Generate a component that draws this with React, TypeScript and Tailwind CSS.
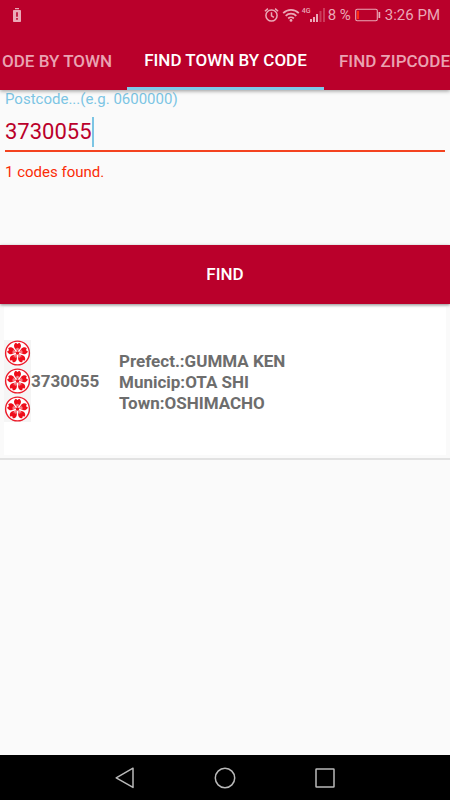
import { useState } from 'react';

const results = [
  {
    code: '3730055',
    prefecture: 'GUMMA KEN',
    municipality: 'OTA SHI',
    town: 'OSHIMACHO',
  },
];

type Result = (typeof results)[number];

export default function App() {
  return (
    <div className="flex min-h-screen flex-col bg-[#fafafa] font-['Roboto',sans-serif]">
      <header className="z-10 bg-[#ba002b] shadow-[0_1px_4px_rgba(0,0,0,0.4)]">
        <StatusBar />
        <Tabs />
      </header>
      <main className="flex flex-1 flex-col">
        <SearchForm />
        <ul>
          {results.map((result) => (
            <ResultRow key={result.code} result={result} />
          ))}
        </ul>
      </main>
      <NavigationBar />
    </div>
  );
}

function StatusBar() {
  return (
    <div className="flex h-[30px] items-center justify-between pr-[10px] pl-3 text-[#eaa9b7]">
      <svg viewBox="0 0 10 16" className="h-4 w-[10px]" fill="currentColor" aria-label="Low battery">
        <path
          fillRule="evenodd"
          d="M3 1h4v1.3H3zM1.800 3h6.400q.8 0 .8.8v10.400q0 .8-.8.8H1.800q-.8 0-.8-.8V3.800q0-.8.8-.8zM4.200 5.200v4.600h1.600V5.200zM4.200 11v1.700h1.600V11z"
        />
      </svg>
      <div className="flex items-center">
        <AlarmIcon />
        <WifiIcon />
        <SignalIcon />
        <span className="ml-[3px] text-[15px] leading-5">8 %</span>
        <BatteryIcon />
        <span className="ml-1 text-[15px] leading-5">3:26 PM</span>
      </div>
    </div>
  );
}

function AlarmIcon() {
  return (
    <svg viewBox="0 0 15 16" className="h-4 w-[15px]" fill="none" stroke="currentColor" strokeWidth="1.500">
      <circle cx="7.500" cy="8.500" r="5.600" />
      <path d="M7.500 5.300v3.500l2.400 1.500M.9 4.200l3-2.600M14.100 4.200l-3-2.600" />
    </svg>
  );
}

function WifiIcon() {
  return (
    <svg viewBox="0 0 18 16" className="ml-[3px] h-4 w-[18px]" fill="none" stroke="currentColor" strokeWidth="1.800">
      <path d="M1.200 6.100a11 11 0 0 1 15.600 0M3.700 8.900a7.500 7.500 0 0 1 10.600 0M6.200 11.500a4 4 0 0 1 5.600 0" />
      <circle cx="9" cy="13.400" r="1.400" fill="currentColor" stroke="none" />
    </svg>
  );
}

function SignalIcon() {
  return (
    <span className="ml-[2px] flex items-center">
      <span className="w-2 pb-2 text-[7px] leading-2 font-medium">4G</span>
      <svg viewBox="0 0 15 14" className="h-[14px] w-[15px]" fill="currentColor" aria-hidden="true">
        <path d="M0 11h2v3H0zM3 9h2v5H3zM6 6h2v8H6z" />
        <path d="M9.500 3h2v11h-2zM13 0h2v14h-2z" opacity="0.35" />
      </svg>
    </span>
  );
}

function BatteryIcon() {
  return (
    <svg viewBox="0 0 26 14" className="ml-1 h-[14px] w-[26px]" fill="none">
      <rect x=".7" y="1.200" width="21.600" height="11.600" rx="1.500" stroke="#eaa9b7" strokeWidth="1.100" />
      <path d="M23.500 4h1.700v6h-1.700z" fill="#eaa9b7" />
      <path d="M2 3h2v8H2z" fill="#ff2a12" />
    </svg>
  );
}

function Tabs() {
  return (
    <nav className="flex h-[60px] overflow-hidden text-[17px] font-medium whitespace-nowrap text-[#eaa3b2]">
      <a href="#code-by-town" className="flex w-[127px] shrink-0 items-center justify-end pt-[3px] pr-[15px]">
        ODE BY TOWN
      </a>
      <a
        href="#town-by-code"
        aria-current="page"
        className="flex w-[197px] shrink-0 items-center justify-center border-b-3 border-[#7ec8e8] pt-[5px] text-white"
      >
        FIND TOWN BY CODE
      </a>
      <a href="#find-zipcode" className="flex shrink-0 items-center pt-[3px] pl-[15px]">
        FIND ZIPCODE
      </a>
    </nav>
  );
}

function SearchForm() {
  const [postcode, setPostcode] = useState('3730055');

  return (
    <form onSubmit={(event) => event.preventDefault()}>
      <div className="flex flex-col px-[5px] pb-[63px]">
        <label htmlFor="postcode" className="text-[15px] leading-[18px] text-[#7cc5e4]">
          Postcode...(e.g. 0600000)
        </label>
        <div className="flex h-11 items-center border-b-2 border-[#f4431f] pt-[6px]">
          <input
            id="postcode"
            inputMode="numeric"
            value={postcode}
            onChange={(event) => setPostcode(event.target.value)}
            className="field-sizing-content text-[22px] leading-[30px] text-[#ba002b] caret-transparent outline-none"
          />
          <span className="h-[30px] w-[2px] bg-[#7cc5e4]" />
        </div>
        <p className="pt-[10px] text-[15px] leading-5 text-[#fb2c06]">1 codes found.</p>
      </div>
      <button
        type="submit"
        className="relative block h-[59px] w-full bg-[#ba002b] text-[17px] font-medium text-white shadow-[0_1px_3px_rgba(0,0,0,0.45)]"
      >
        FIND
      </button>
    </form>
  );
}

function ResultRow({ result }: { result: Result }) {
  return (
    <li className="border-b-2 border-[#e2e2e2] px-1 py-[3px] text-[17px] font-bold text-[#6d6d6d]">
      <div className="flex h-[148px] items-center bg-white">
        <div className="flex flex-col items-center gap-[2px] bg-[#f5f5f5]">
          <BlossomIcon />
          <BlossomIcon />
          <BlossomIcon />
        </div>
        <span className="w-[88px] pt-[2px]">{result.code}</span>
        <div className="pt-[2px] leading-[21px]">
          <p>Prefect.:{result.prefecture}</p>
          <p>Municip:{result.municipality}</p>
          <p>Town:{result.town}</p>
        </div>
      </div>
    </li>
  );
}

// Five notched petals with white stamens, turned round the centre.
function BlossomIcon() {
  return (
    <svg viewBox="-13 -13 26 26" className="h-[26px] w-[27px]" aria-hidden="true">
      <circle r="11.900" fill="#fff" stroke="#ec1c2b" strokeWidth="1.400" />
      {[0, 72, 144, 216, 288].map((angle) => (
        <g key={angle} transform={`rotate(${angle})`}>
          <path
            d="M0-1.600C-1.200-3.300-3.500-4.700-3.500-7-3.500-8.600-2.700-9.700-1.600-10.300L0-8.900 1.600-10.300C2.700-9.700 3.500-8.600 3.500-7 3.500-4.700 1.200-3.300 0-1.600z"
            fill="#ee0d1a"
          />
          <path d="M0-2.500V-5.200M-.6-3-1.400-4.900M.6-3 1.400-4.900" stroke="#fff" strokeWidth=".5" />
        </g>
      ))}
      <circle r="1.700" fill="#ee0d1a" />
    </svg>
  );
}

function NavigationBar() {
  return (
    <nav className="flex h-[45px] items-center justify-center gap-[76px] bg-black text-[#b9b9b9]">
      <button type="button" aria-label="Back">
        <svg viewBox="0 0 24 24" className="size-6" fill="none" stroke="currentColor" strokeWidth="1.500">
          <path d="M20 2.200v19.200L3.200 11.800z" strokeLinejoin="round" />
        </svg>
      </button>
      <button type="button" aria-label="Home">
        <svg viewBox="0 0 24 24" className="size-6" fill="none" stroke="currentColor" strokeWidth="1.500">
          <circle cx="12" cy="12" r="9.700" />
        </svg>
      </button>
      <button type="button" aria-label="Recent apps">
        <svg viewBox="0 0 24 24" className="size-6" fill="none" stroke="currentColor" strokeWidth="1.500">
          <rect x="3" y="3" width="18" height="18" rx=".5" />
        </svg>
      </button>
    </nav>
  );
}
